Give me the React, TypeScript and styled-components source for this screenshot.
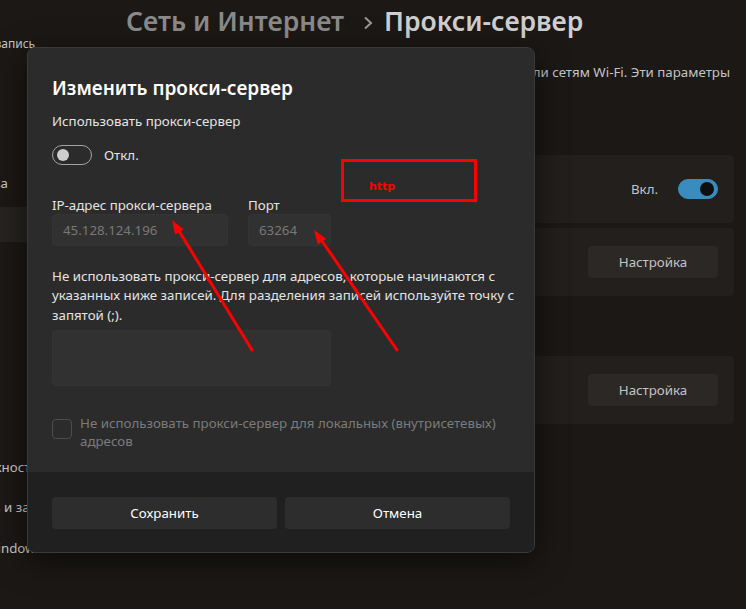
import styled, { createGlobalStyle } from "styled-components";

const FONT = `"Noto Sans", "Open Sans", sans-serif`;
const BODY = "13.3px";

const GlobalStyle = createGlobalStyle`
  html, body {
    margin: 0;
    padding: 0;
    background: #1b1815;
    overflow: hidden;
  }
  * {
    box-sizing: border-box;
  }
`;

const navItems = [
  "Система",
  "Bluetooth и устройства",
  "Сеть и Интернет",
  "Персонализация",
  "Приложения",
  "Учетные записи",
  "Время и язык",
  "Игры",
  "Специальные возможности",
  "Конфиденциальность и защита",
  "Центр обновления Windows",
];

const App = () => {
  return (
    <Page>
      <GlobalStyle />
      <Sidebar>
        <Account>Учетная запись</Account>
        <NavList>
          {navItems.map((item) => (
            <NavItem key={item} $active={item === "Сеть и Интернет"}>
              {item}
            </NavItem>
          ))}
        </NavList>
      </Sidebar>

      <Main>
        <Header>
          <Crumb>Сеть и Интернет</Crumb>
          <Chevron viewBox="0 0 10 14">
            <path d="M2 1.5 L8 7 L2 12.5" />
          </Chevron>
          <Current>Прокси-сервер</Current>
        </Header>
        <Description>
          <span>
            Используйте прокси-сервер для подключений Ethernet или сетям Wi-Fi. Эти параметры
          </span>
        </Description>
        <DescriptionTail>не применяются к VPN-подключениям.</DescriptionTail>

        <SectionTitle>Автоматическая настройка прокси</SectionTitle>
        <Cards>
          <Card>
            <CardLabel>Определять параметры автоматически</CardLabel>
            <CardSide>
              <StateText>Вкл.</StateText>
              <Toggle $on>
                <Knob $on />
              </Toggle>
            </CardSide>
          </Card>
          <Card>
            <CardLabel>Использовать сценарий настройки</CardLabel>
            <SettingsButton>Настройка</SettingsButton>
          </Card>
        </Cards>

        <SectionTitle $gap={30}>Настройка прокси вручную</SectionTitle>
        <Cards $gap={10}>
          <Card>
            <CardLabel>Использовать прокси-сервер</CardLabel>
            <SettingsButton>Настройка</SettingsButton>
          </Card>
        </Cards>
      </Main>

      <Dialog>
        <DialogBody>
          <Title>Изменить прокси-сервер</Title>
          <FieldLabel $gap={9}>Использовать прокси-сервер</FieldLabel>
          <ToggleRow>
            <Toggle>
              <Knob />
            </Toggle>
            <ToggleText>Откл.</ToggleText>
          </ToggleRow>

          <Fields>
            <Field>
              <SmallLabel>IP-адрес прокси-сервера</SmallLabel>
              <Input $width={176}>45.128.124.196</Input>
            </Field>
            <Field>
              <SmallLabel>Порт</SmallLabel>
              <Input $width={83}>63264</Input>
            </Field>
          </Fields>

          <Paragraph>
            Не использовать прокси-сервер для адресов, которые начинаются с
            <br />
            указанных ниже записей. Для разделения записей используйте точку с
            <br />
            запятой (;).
          </Paragraph>
          <TextArea />

          <CheckRow>
            <CheckBox />
            <CheckText>
              Не использовать прокси-сервер для локальных (внутрисетевых)
              <br />
              адресов
            </CheckText>
          </CheckRow>
        </DialogBody>
        <Footer>
          <FooterButton>Сохранить</FooterButton>
          <FooterButton>Отмена</FooterButton>
        </Footer>
      </Dialog>

      <Annotation>
        <AnnotationText>http</AnnotationText>
      </Annotation>
      <Arrows viewBox="0 0 746 609">
        <line x1="252" y1="350" x2="179" y2="231" />
        <polygon points="172,220 183.6,229.3 175.1,234.5" />
        <line x1="397" y1="350" x2="322" y2="241" />
        <polygon points="314,230 326.1,238.7 317.9,244.4" />
      </Arrows>
    </Page>
  );
};

const Page = styled.div`
  position: relative;
  display: flex;
  width: 746px;
  height: 609px;
  overflow: hidden;
  background: #1b1815;
  font-family: ${FONT};
`;

const Sidebar = styled.nav`
  flex-shrink: 0;
  width: 250px;
  margin-left: -170px;
  padding-top: 35px;
`;

const Account = styled.div`
  margin-left: 115px;
  font-size: 12px;
  line-height: 18px;
  color: #c9c9c9;
  white-space: nowrap;
`;

const NavList = styled.div`
  display: flex;
  flex-direction: column;
  gap: 5.5px;
  margin-top: 73px;
`;

const NavItem = styled.div<{ $active?: boolean }>`
  height: 35px;
  margin: 0 6px;
  padding: 0 0 2px 24px;
  display: flex;
  align-items: center;
  border-radius: 4px;
  font-size: ${BODY};
  color: #c9c9c9;
  white-space: nowrap;
  background: ${(p) => (p.$active ? "#262320" : "transparent")};
`;

const Main = styled.main`
  flex: 1;
  min-width: 0;
  padding: 2px 12px 0 46px;
`;

const Header = styled.h1`
  display: flex;
  align-items: center;
  margin: 0;
  height: 38px;
  font-size: 26.5px;
  line-height: 38px;
  font-weight: 600;
  white-space: nowrap;
`;

const Crumb = styled.span`
  color: #8a8a8a;
`;

const Current = styled.span`
  color: #cfcfcf;
`;

const Chevron = styled.svg`
  width: 10px;
  height: 14px;
  margin: 3px 11px 0 19px;
  fill: none;
  stroke: #9a9a9a;
  stroke-width: 2;
`;

const Description = styled.div`
  display: flex;
  justify-content: flex-end;
  margin-top: 22px;
  padding-right: 4px;
  font-size: ${BODY};
  line-height: 20px;
  color: #c4c4c4;
  white-space: nowrap;
`;

const DescriptionTail = styled.div`
  font-size: ${BODY};
  line-height: 20px;
  color: #c4c4c4;
`;

const SectionTitle = styled.div<{ $gap?: number }>`
  margin-top: ${(p) => p.$gap ?? 20}px;
  font-size: ${BODY};
  line-height: 20px;
  font-weight: 600;
  color: #c4c4c4;
`;

const Cards = styled.div<{ $gap?: number }>`
  display: flex;
  flex-direction: column;
  gap: 5px;
  margin-top: ${(p) => p.$gap ?? 13}px;
`;

const Card = styled.div`
  height: 68px;
  display: flex;
  align-items: center;
  justify-content: space-between;
  padding: 0 16px 0 20px;
  border-radius: 4px;
  background: #221f1c;
`;

const CardLabel = styled.span`
  font-size: ${BODY};
  color: #c4c4c4;
`;

const CardSide = styled.div`
  display: flex;
  align-items: center;
  gap: 20px;
`;

const StateText = styled.span`
  font-size: ${BODY};
  color: #c4c4c4;
`;

const Toggle = styled.div<{ $on?: boolean }>`
  width: 40px;
  height: 20px;
  border-radius: 10px;
  display: flex;
  align-items: center;
  padding: 0 3px;
  justify-content: ${(p) => (p.$on ? "flex-end" : "flex-start")};
  background: ${(p) => (p.$on ? "#3a8cbf" : "transparent")};
  border: 1px solid ${(p) => (p.$on ? "#3a8cbf" : "#a3a3a3")};
`;

const Knob = styled.div<{ $on?: boolean }>`
  width: ${(p) => (p.$on ? 14 : 12)}px;
  height: ${(p) => (p.$on ? 14 : 12)}px;
  margin: 0 ${(p) => (p.$on ? 0 : 1)}px;
  border-radius: 50%;
  background: ${(p) => (p.$on ? "#0f0f0f" : "#cdcdcd")};
`;

const SettingsButton = styled.div`
  width: 130px;
  height: 32px;
  display: flex;
  align-items: center;
  justify-content: center;
  border-radius: 4px;
  background: #2b2825;
  font-size: ${BODY};
  color: #c4c4c4;
`;

const Dialog = styled.section`
  position: absolute;
  left: 27px;
  top: 47px;
  width: 508px;
  border-radius: 8px;
  overflow: hidden;
  background: #2b2b2b;
  border: 1px solid #3a3a3a;
  box-shadow: 0 8px 32px rgba(0, 0, 0, 0.55);
`;

const DialogBody = styled.div`
  padding: 26px 24px 21.5px 24px;
`;

const Title = styled.h2`
  margin: 0;
  font-size: 19px;
  line-height: 28px;
  font-weight: 600;
  color: #ffffff;
`;

const FieldLabel = styled.div<{ $gap?: number }>`
  margin-top: ${(p) => p.$gap ?? 0}px;
  font-size: ${BODY};
  line-height: 20px;
  color: #e4e4e4;
`;

const ToggleRow = styled.div`
  display: flex;
  align-items: center;
  gap: 12px;
  margin-top: 14px;
`;

const ToggleText = styled.span`
  font-size: ${BODY};
  color: #e4e4e4;
`;

const Fields = styled.div`
  display: flex;
  gap: 20px;
  margin-top: 31px;
`;

const Field = styled.div`
  display: flex;
  flex-direction: column;
`;

const SmallLabel = styled.div`
  font-size: ${BODY};
  line-height: 18px;
  color: #e4e4e4;
`;

const Input = styled.div<{ $width: number }>`
  width: ${(p) => p.$width}px;
  height: 32px;
  display: flex;
  align-items: center;
  padding-left: 10px;
  border-radius: 4px;
  background: #313131;
  border: 1px solid #343434;
  font-size: ${BODY};
  color: #787878;
`;

const Paragraph = styled.p`
  margin: 20.5px 0 0;
  font-size: ${BODY};
  line-height: 19.5px;
  color: #e4e4e4;
  white-space: nowrap;
`;

const TextArea = styled.div`
  width: 279px;
  height: 56px;
  margin-top: 5px;
  border-radius: 4px;
  background: #313131;
  border: 1px solid #343434;
`;

const CheckRow = styled.div`
  display: flex;
  align-items: flex-start;
  gap: 8px;
  margin-top: 29px;
`;

const CheckBox = styled.div`
  flex-shrink: 0;
  width: 20px;
  height: 20px;
  margin-top: 4px;
  border-radius: 4px;
  border: 1px solid #4c4c4c;
`;

const CheckText = styled.div`
  font-size: ${BODY};
  line-height: 17.5px;
  color: #7b7b7b;
  white-space: nowrap;
`;

const Footer = styled.div`
  display: grid;
  grid-template-columns: 1fr 1fr;
  gap: 8px;
  padding: 25px 24px 23px;
  background: #202020;
`;

const FooterButton = styled.div`
  height: 32px;
  display: flex;
  align-items: center;
  justify-content: center;
  border-radius: 4px;
  background: #2d2d2d;
  font-size: ${BODY};
  color: #ffffff;
`;

const Annotation = styled.div`
  position: absolute;
  left: 341px;
  top: 159px;
  width: 136px;
  height: 43px;
  border: 3px solid #ff0000;
  padding: 19px 0 0 25px;
`;

const AnnotationText = styled.span`
  display: block;
  font-family: "DejaVu Sans", Verdana, sans-serif;
  font-size: 11px;
  line-height: 12px;
  font-weight: 700;
  color: #ff0000;
`;

const Arrows = styled.svg`
  position: absolute;
  left: 0;
  top: 0;
  width: 746px;
  height: 609px;
  pointer-events: none;

  line {
    stroke: #ff0000;
    stroke-width: 3;
    stroke-linecap: round;
  }

  polygon {
    fill: #ff0000;
  }
`;

export default App;
